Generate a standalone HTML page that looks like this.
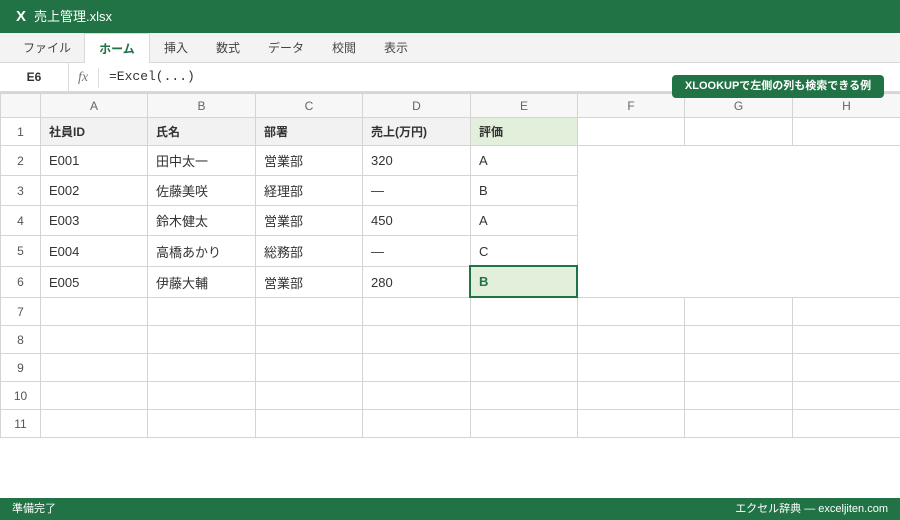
<!DOCTYPE html>
<html><head><meta charset="utf-8">
<style>
*{box-sizing:border-box;margin:0;padding:0}
body{width:900px;height:520px;overflow:hidden;background:#fff;font-family:"Liberation Sans","Noto Sans CJK JP",sans-serif;position:relative;color:#333}
.title{position:absolute;left:0;top:0;width:900px;height:33px;background:#217346;color:#fff;font-size:13px;line-height:33px;padding-left:16px}
.title b{font-size:15px;margin-right:8px}
.tabs{position:absolute;left:0;top:33px;width:900px;height:30px;background:#f3f3f3;border-bottom:1px solid #d8d8d8}
.tab{position:absolute;top:0;height:30px;line-height:30px;font-size:12px;color:#444}
.tab.act{background:#fff;border:1px solid #d8d8d8;border-bottom:none;height:31px;color:#217346;font-weight:bold;text-align:center}
.fbar{position:absolute;left:0;top:63px;width:900px;height:30px;background:#fff;border-bottom:2px solid #d8d8d8}
.grid{position:absolute;left:0;top:93px;display:grid;grid-template-columns:40px 107px 108px 107px 108px 107px 107px 108px 108px;grid-template-rows:24px 28px 30px 30px 30px 31px 31px 28px 28px 28px 28px 28px;border-left:1px solid #d4d4d4;border-top:1px solid #d4d4d4;width:900px}
.grid div{border-right:1px solid #d4d4d4;border-bottom:1px solid #d4d4d4;font-size:13px;padding-left:8px;display:flex;align-items:center;color:#333}
.grid .h{background:#f7f7f7;justify-content:center;padding:0;color:#666;font-size:12px}
.grid .r{justify-content:center;padding:0;color:#555;font-size:12px}
.grid .b{background:#f2f2f2;font-weight:bold;font-size:12px}
.grid .e{background:#e2efda;font-weight:bold;font-size:12px}
.grid .n{border:none}
.grid .nb{border-right:none}
.sel{position:absolute;left:469px;top:265px;width:109px;height:33px;border:2px solid #217346;background:#e2efda;color:#217346;font-weight:bold;font-size:13px;padding-left:8px;line-height:29px}
.tip{position:absolute;left:672px;top:75px;width:212px;height:23px;background:#217346;border-radius:4px;color:#fff;font-size:11px;font-weight:bold;text-align:center;line-height:23px}
.status{position:absolute;left:0;top:498px;width:900px;height:22px;background:#217346;color:#fff;font-size:11px;line-height:22px;padding:0 12px}
</style></head><body>
<div class="title"><b>X</b>売上管理.xlsx</div>
<div class="tabs">
<div class="tab" style="left:23px">ファイル</div>
<div class="tab act" style="left:84px;width:66px">ホーム</div>
<div class="tab" style="left:164px">挿入</div>
<div class="tab" style="left:216px">数式</div>
<div class="tab" style="left:268px">データ</div>
<div class="tab" style="left:332px">校閲</div>
<div class="tab" style="left:384px">表示</div>
</div>
<div class="fbar">
<div style="position:absolute;left:0;top:0;width:69px;height:28px;line-height:28px;text-align:center;font-weight:bold;font-size:12px;border-right:1px solid #ddd">E6</div>
<div style="position:absolute;left:78px;top:0;line-height:30px;font-style:italic;color:#777;font-size:14px;font-family:'Liberation Serif',serif">fx</div>
<div style="position:absolute;left:98px;top:5px;width:1px;height:20px;background:#ddd"></div>
<div style="position:absolute;left:109px;top:0;line-height:28px;font-family:'Liberation Mono',monospace;font-size:13px">=Excel(...)</div>
</div>
<div class="grid">
<div class="h"></div><div class="h">A</div><div class="h">B</div><div class="h">C</div><div class="h">D</div><div class="h">E</div><div class="h">F</div><div class="h">G</div><div class="h">H</div>
<div class="r">1</div><div class="b">社員ID</div><div class="b">氏名</div><div class="b">部署</div><div class="b">売上(万円)</div><div class="e">評価</div><div></div><div></div><div></div>
<div class="r">2</div><div>E001</div><div>田中太一</div><div>営業部</div><div>320</div><div>A</div><div class="n"></div><div class="n"></div><div class="n"></div>
<div class="r">3</div><div>E002</div><div>佐藤美咲</div><div>経理部</div><div>—</div><div>B</div><div class="n"></div><div class="n"></div><div class="n"></div>
<div class="r">4</div><div>E003</div><div>鈴木健太</div><div>営業部</div><div>450</div><div>A</div><div class="n"></div><div class="n"></div><div class="n"></div>
<div class="r">5</div><div>E004</div><div>高橋あかり</div><div>総務部</div><div>—</div><div>C</div><div class="n"></div><div class="n"></div><div class="n"></div>
<div class="r">6</div><div>E005</div><div>伊藤大輔</div><div>営業部</div><div>280</div><div></div><div class="nb"></div><div class="nb"></div><div class="nb"></div>
<div class="r">7</div><div></div><div></div><div></div><div></div><div></div><div></div><div></div><div></div>
<div class="r">8</div><div></div><div></div><div></div><div></div><div></div><div></div><div></div><div></div>
<div class="r">9</div><div></div><div></div><div></div><div></div><div></div><div></div><div></div><div></div>
<div class="r">10</div><div></div><div></div><div></div><div></div><div></div><div></div><div></div><div></div>
<div class="r">11</div><div></div><div></div><div></div><div></div><div></div><div></div><div></div><div></div>
</div>
<div class="sel">B</div>
<div class="tip">XLOOKUPで左側の列も検索できる例</div>
<div class="status"><span>準備完了</span><span style="float:right">エクセル辞典 — exceljiten.com</span></div>
</body></html>
